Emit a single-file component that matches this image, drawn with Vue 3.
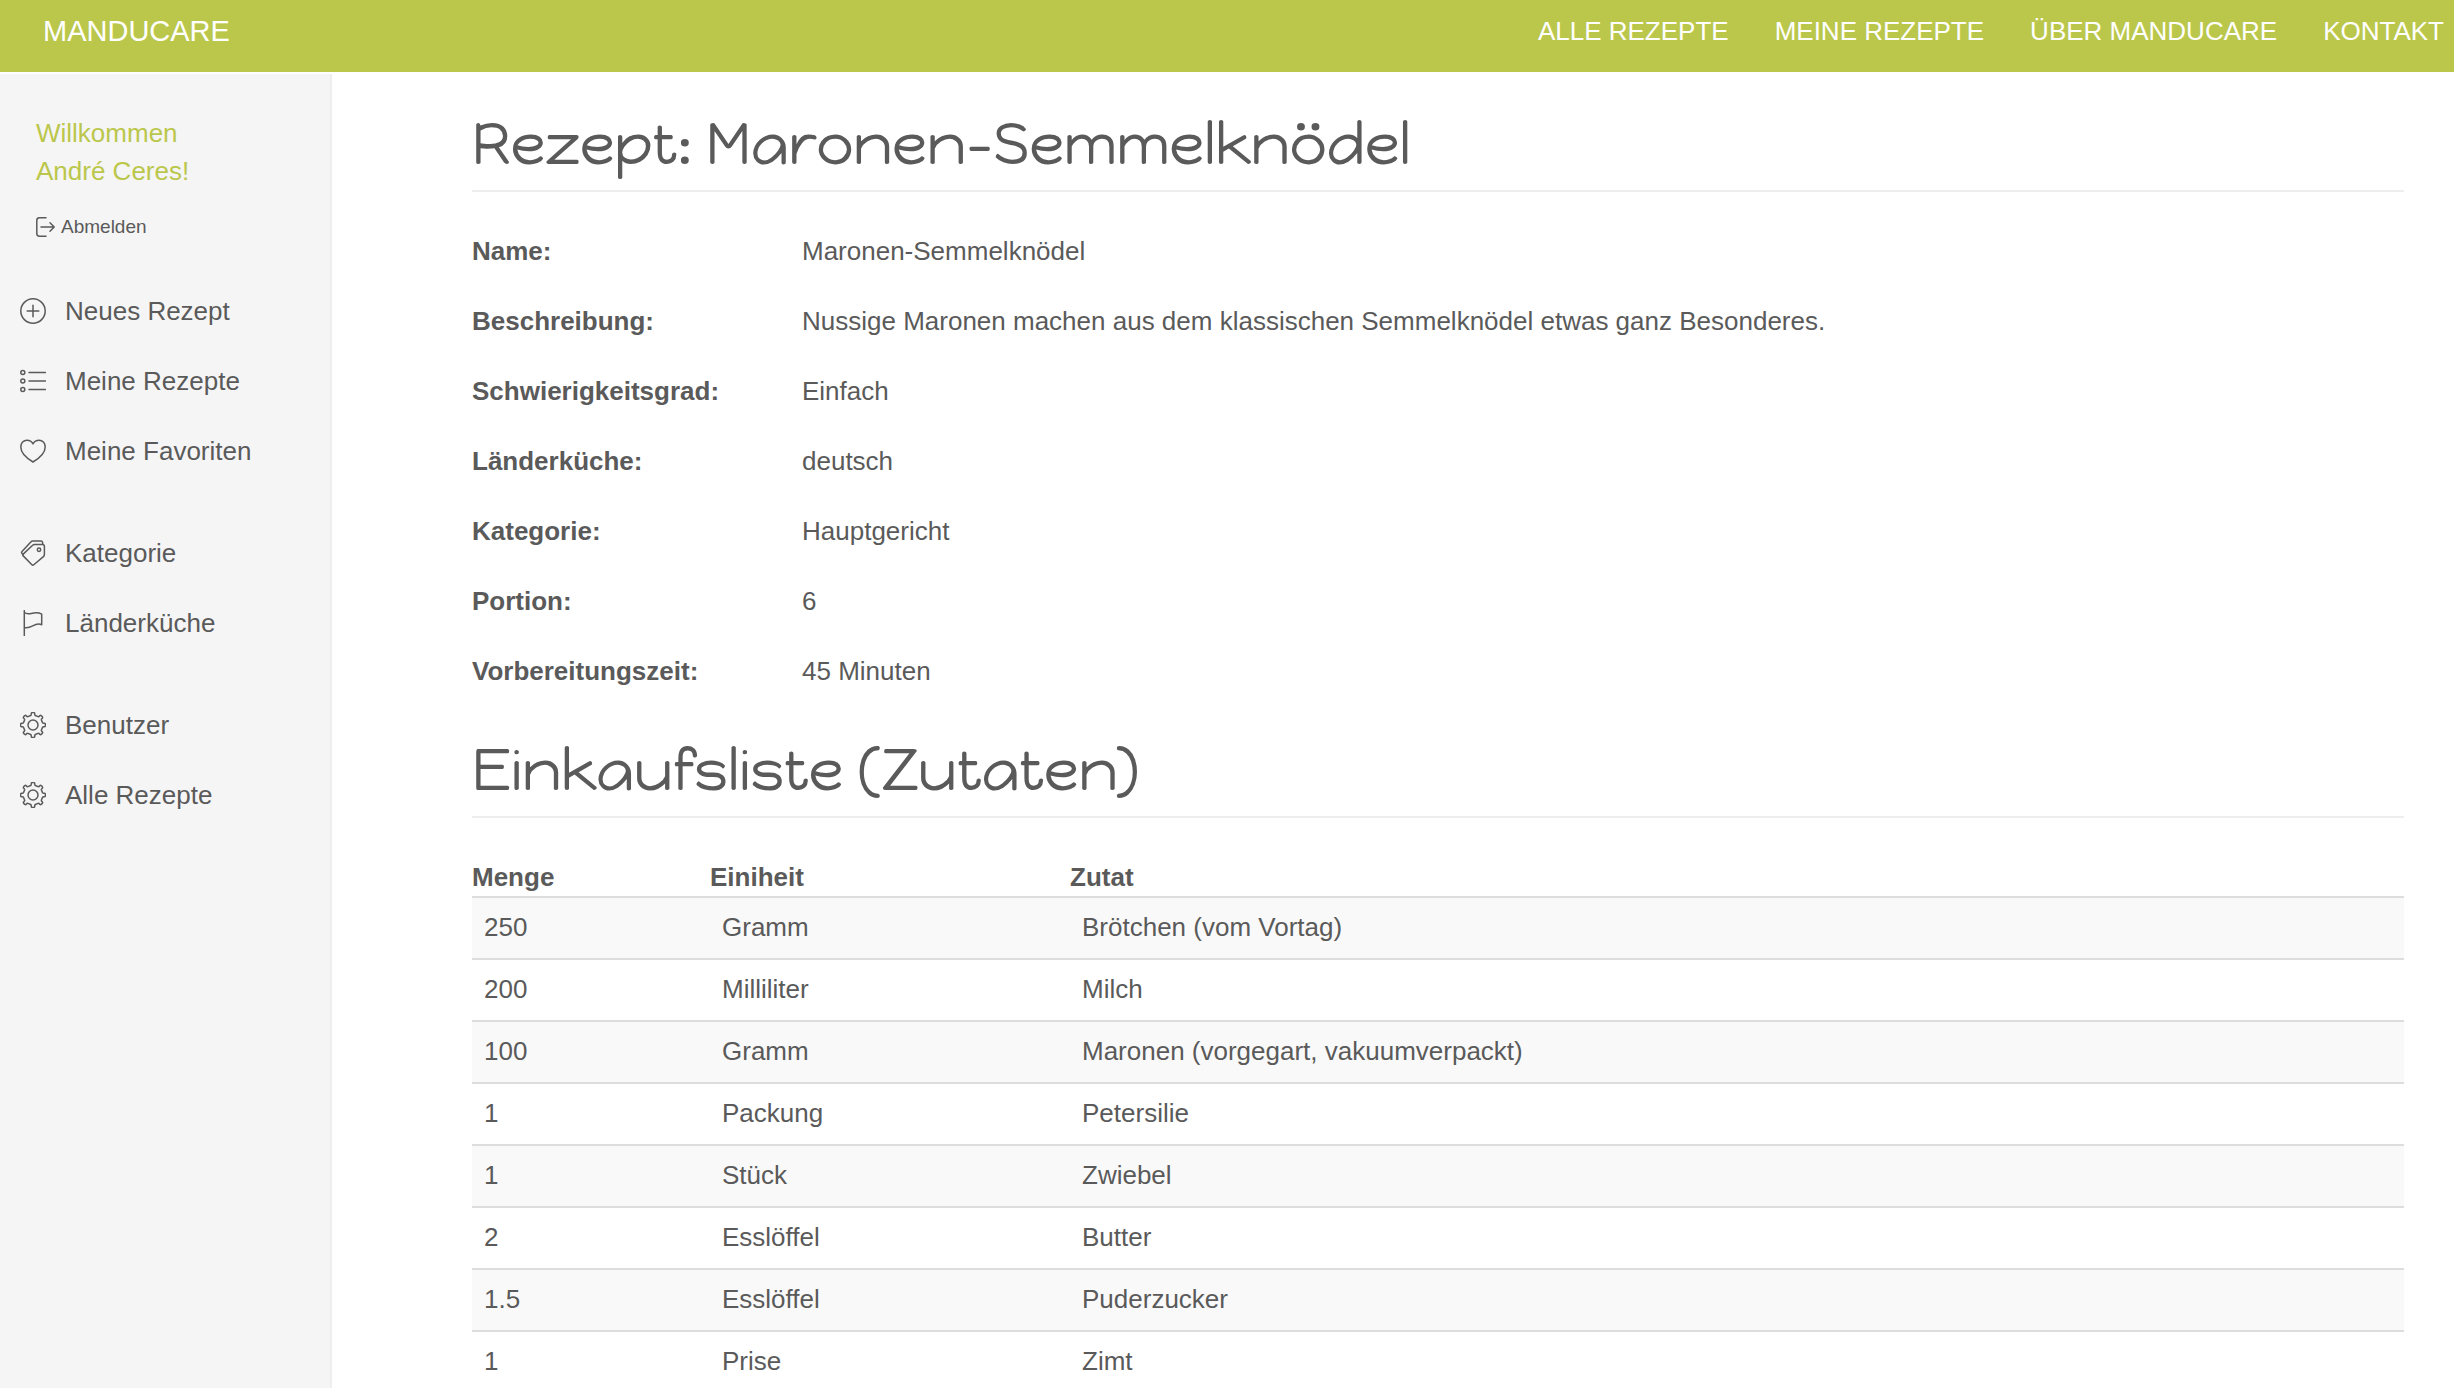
<script setup>
const topLinks = ['ALLE REZEPTE', 'MEINE REZEPTE', 'ÜBER MANDUCARE', 'KONTAKT']

// Cog outline with eight rounded teeth, centred in a 26 x 26 box.
function cogPath() {
  const at = (deg, r) => {
    const a = (deg * Math.PI) / 180
    return `${(13 + r * Math.sin(a)).toFixed(2)} ${(13 - r * Math.cos(a)).toFixed(2)}`
  }
  let d = ''
  for (let t = 0; t < 360; t += 45) {
    d += `${t ? 'L' : 'M'}${at(t - 14, 9.8)}Q${at(t - 9, 10)} ${at(t - 9, 11.4)}`
    d += `Q${at(t - 8, 12.5)} ${at(t - 3, 12.5)}L${at(t + 3, 12.5)}`
    d += `Q${at(t + 8, 12.5)} ${at(t + 9, 11.4)}Q${at(t + 9, 10)} ${at(t + 14, 9.8)}`
  }
  return d + 'Z M18 13a5 5 0 1 1-10 0a5 5 0 1 1 10 0z'
}
const gear = cogPath()

const groups = [
  [
    { label: 'Neues Rezept', icon: 'M25.2 13a12.2 12.2 0 1 1-24.4 0a12.2 12.2 0 1 1 24.4 0z M13 7.2v11.6 M7.2 13h11.6' },
    { label: 'Meine Rezepte', icon: 'M4.8 4.5a2 2 0 1 1-4 0a2 2 0 1 1 4 0z M4.8 13a2 2 0 1 1-4 0a2 2 0 1 1 4 0z M4.8 21.5a2 2 0 1 1-4 0a2 2 0 1 1 4 0z M9 4.5h16.5 M9 13h16.5 M9 21.5h16.5' },
    { label: 'Meine Favoriten', icon: 'M13 24C9 21.600 .8 16 .8 9C.8 5 3.500 2.200 7 2.200c2.500 0 4.700 1.300 6 3.600c1.300-2.300 3.500-3.600 6-3.600c3.500 0 6.200 2.800 6.200 6.800C25.200 16 17 21.600 13 24z' },
  ],
  [
    { label: 'Kategorie', icon: 'M11.900 24.700L3.200 15.900c-.6-.6-.6-1.200 0-1.800L12.600 5.200c.6-.6 1.100-.8 1.900-.8h8c1.300 0 1.900.6 1.900 1.900v8.200c0 .8-.2 1.300-.7 1.900l-9.900 8.300c-.7.600-1.300.6-1.900 0z M3.200 14.700l-1.300-1.500c-.5-.6-.5-1.100.1-1.700l8.800-9.600c.6-.7 1.200-.9 2-.9h7.900c1.200 0 1.900.6 2 1.800v1.500 M20.700 9.800a1.700 1.700 0 1 1-3.400 0a1.700 1.700 0 1 1 3.400 0z' },
    { label: 'Länderküche', icon: 'M4.300.5v25 M4.300 2.500c2 1.600 4.200 1.600 7 .9c3.800-.9 7.500-1 10.400.7v10.600c-3.200-1.500-5.900-.6-9 1.100c-2.900 1.600-5.400 2.300-8.400 1.700' },
  ],
  [
    { label: 'Benutzer', icon: gear },
    { label: 'Alle Rezepte', icon: gear },
  ],
]

const details = [
  ['Name:', 'Maronen-Semmelknödel'],
  ['Beschreibung:', 'Nussige Maronen machen aus dem klassischen Semmelknödel etwas ganz Besonderes.'],
  ['Schwierigkeitsgrad:', 'Einfach'],
  ['Länderküche:', 'deutsch'],
  ['Kategorie:', 'Hauptgericht'],
  ['Portion:', '6'],
  ['Vorbereitungszeit:', '45 Minuten'],
]

const ingredients = [
  ['250', 'Gramm', 'Brötchen (vom Vortag)'],
  ['200', 'Milliliter', 'Milch'],
  ['100', 'Gramm', 'Maronen (vorgegart, vakuumverpackt)'],
  ['1', 'Packung', 'Petersilie'],
  ['1', 'Stück', 'Zwiebel'],
  ['2', 'Esslöffel', 'Butter'],
  ['1.5', 'Esslöffel', 'Puderzucker'],
  ['1', 'Prise', 'Zimt'],
]
</script>

<template>
  <div class="page">
    <header class="topbar">
      <a class="brand" href="#">MANDUCARE</a>
      <nav class="topnav">
        <a v-for="link in topLinks" :key="link" href="#">{{ link }}</a>
      </nav>
    </header>

    <div class="body">
      <aside class="sidebar">
        <p class="welcome">Willkommen<br />André Ceres!</p>
        <a class="logout" href="#">
          <svg class="logout-icon" viewBox="0 0 20 20" aria-hidden="true">
            <path d="M10 .8H3.500C1.800.8.800 1.800.800 3.500v13c0 1.700 1 2.700 2.700 2.700H10 M5 10h13 M14 5.800L18.200 10L14 14.200" />
          </svg>
          Abmelden
        </a>
        <nav>
          <ul v-for="(group, i) in groups" :key="i" class="menu">
            <li v-for="item in group" :key="item.label">
              <a href="#">
                <svg class="icon" viewBox="0 0 26 26" aria-hidden="true"><path :d="item.icon" /></svg>
                {{ item.label }}
              </a>
            </li>
          </ul>
        </nav>
      </aside>

      <main class="content">
        <h1>Rezept: Maronen-Semmelknödel</h1>
        <dl class="details">
          <template v-for="[term, value] in details" :key="term">
            <dt>{{ term }}</dt>
            <dd>{{ value }}</dd>
          </template>
        </dl>

        <h1>Einkaufsliste (Zutaten)</h1>
        <table class="ingredients">
          <thead>
            <tr>
              <th class="amount" scope="col">Menge</th>
              <th class="unit" scope="col">Einiheit</th>
              <th scope="col">Zutat</th>
            </tr>
          </thead>
          <tbody>
            <tr v-for="row in ingredients" :key="row[2]">
              <td v-for="(cell, i) in row" :key="i">{{ cell }}</td>
            </tr>
          </tbody>
        </table>
      </main>
    </div>
  </div>
</template>

<style>
body {
  margin: 0;
  background: #fff;
}
</style>

<style scoped>
.page {
  display: flex;
  flex-direction: column;
  min-height: 100vh;
  color: #5a5a5a;
  font-family: "Liberation Sans", Arial, sans-serif;
  font-size: 26px;
  line-height: 38px;
}

a {
  color: inherit;
  text-decoration: none;
}

.topbar {
  display: flex;
  justify-content: space-between;
  align-items: flex-start;
  height: 72px;
  box-sizing: border-box;
  padding: 12px 10px 0 43px;
  margin-bottom: 2px;
  background: #bbc74b;
  color: #fff;
}

.brand {
  font-size: 29px;
}

.topnav {
  display: flex;
  gap: 46px;
}

.body {
  display: flex;
  flex: 1;
}

.sidebar {
  width: 330px;
  flex: none;
  padding-top: 40px;
  background: #f5f5f5;
  border-right: 2px solid #eee;
}

.welcome {
  margin: 0 36px 18px;
  color: #bbc74b;
}

.logout {
  display: flex;
  align-items: center;
  gap: 5px;
  margin: 0 36px 30px;
  font-size: 19px;
}

svg {
  flex: none;
  fill: none;
  stroke: currentColor;
  stroke-width: 1.5;
  stroke-linecap: round;
  stroke-linejoin: round;
}

.logout-icon {
  width: 20px;
  height: 20px;
}

.icon {
  width: 26px;
  height: 26px;
}

.menu {
  margin: 0 0 32px;
  padding: 0;
  list-style: none;
}

.menu a {
  display: flex;
  align-items: center;
  gap: 19px;
  padding: 16px 20px;
}

.content {
  flex: 1;
  min-width: 0;
  padding: 39px 50px 0 140px;
}

h1 {
  margin: 0;
  padding-bottom: 15px;
  border-bottom: 2px solid #eee;
  font-family: "Happy Monkey", "DejaVu Sans", sans-serif;
  font-size: 58px;
  font-weight: 400;
  line-height: 62px;
}

.details {
  display: grid;
  grid-template-columns: 330px 1fr;
  margin: 24px 0 33px;
}

dt,
dd {
  margin: 0;
  padding: 16px 0;
}

dt {
  font-weight: 700;
}

.ingredients {
  width: 100%;
  margin-top: 40px;
  border-collapse: collapse;
  table-layout: fixed;
}

th {
  padding: 0;
  text-align: left;
}

.amount {
  width: 238px;
}

.unit {
  width: 360px;
}

td {
  height: 60px;
  box-sizing: border-box;
  padding: 10px 12px 12px;
  border-top: 2px solid #ddd;
}

tbody tr:nth-child(odd) {
  background: #f9f9f9;
}
</style>
